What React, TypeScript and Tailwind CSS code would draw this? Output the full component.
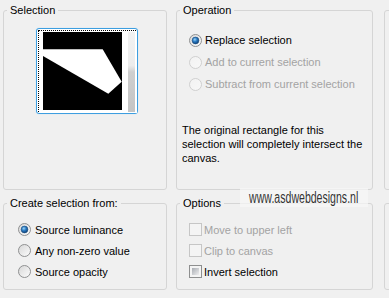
import React from "react";

const font = { fontFamily: '"Liberation Sans", Arial, sans-serif' };

function Radio({ checked, disabled }: { checked?: boolean; disabled?: boolean }) {
    const id = checked ? "rc" : disabled ? "rd" : "rn";
    return (
        <svg width="13" height="13" viewBox="0 0 13 13" className="shrink-0">
            <defs>
                <linearGradient id={id + "f"} x1="0" y1="0" x2="1" y2="1">
                    <stop offset="0" stopColor={disabled ? "#f2f2f2" : "#d6d6d6"} />
                    <stop offset="1" stopColor={disabled ? "#f8f8f8" : "#fdfdfd"} />
                </linearGradient>
                <radialGradient id={id + "d"} cx="0.4" cy="0.35" r="0.7">
                    <stop offset="0" stopColor="#9fd6f7" />
                    <stop offset="0.45" stopColor="#2b7cc4" />
                    <stop offset="1" stopColor="#0d3a6e" />
                </radialGradient>
            </defs>
            <circle cx="6.5" cy="6.5" r="6" fill={`url(#${id}f)`} stroke={disabled ? "#cfcfcf" : "#8f9091"} strokeWidth="1" />
            {checked && <circle cx="6.5" cy="6.5" r="3.4" fill={`url(#${id}d)`} stroke="#1b4d7f" strokeWidth="0.6" />}
        </svg>
    );
}

function Check({ disabled }: { disabled?: boolean }) {
    return (
        <div className={`w-[13px] h-[13px] shrink-0 border p-[2px] ${disabled ? "border-[#c6c6c6] bg-[#f4f4f4]" : "border-[#8e8f8f] bg-[#f4f4f4]"}`}>
            {!disabled && <div className="w-full h-full bg-gradient-to-br from-[#a9adb3] to-[#eeeeef]" />}
        </div>
    );
}

function Group({ title, className, children }: { title?: string; className?: string; children?: React.ReactNode }) {
    return (
        <fieldset className={`border border-[#d5d5d5] rounded-[3px] min-w-0 ${className ?? ""}`}>
            {title && <legend className="ml-[3px] px-[3px] text-[11px] leading-[14px] text-black">{title}</legend>}
            {children}
        </fieldset>
    );
}

function SelectionPreview() {
    return (
        <div className="ml-[32px] mt-[11px] w-[102px] h-[86px] rounded-[3px] border border-[#3d9ee0] p-px bg-white shadow-[0_0_1px_#9fd0f2]">
            <div className="w-full h-full border border-dotted border-black">
                <svg width="98" height="82" viewBox="0 0 98 82" className="block">
                    <defs>
                        <linearGradient id="strip" x1="0" y1="0" x2="0" y2="1">
                            <stop offset="0" stopColor="#f2f2f2" />
                            <stop offset="0.42" stopColor="#ececec" />
                            <stop offset="0.5" stopColor="#cfcfcf" />
                            <stop offset="1" stopColor="#c4c4c4" />
                        </linearGradient>
                    </defs>
                    <rect x="0" y="0" width="98" height="82" fill="#fff" />
                    <rect x="4" y="1" width="79" height="78" fill="#000" />
                    <polygon points="4,18.3 63.7,18.3 82.7,50.7 69.3,62.7 4,25" fill="#fff" />
                    <rect x="89" y="1" width="7" height="80" fill="url(#strip)" />
                </svg>
            </div>
        </div>
    );
}

export default function App() {
    return (
        <div className="relative w-[389px] h-[298px] overflow-hidden bg-[#f0f0f0] text-[11px] leading-[14px]" style={font}>
            <div className="flex gap-[9px] pt-[3px] pl-[3px] w-[440px]">
                <div className="w-[164px] shrink-0 flex flex-col gap-[6px]">
                    <Group title="Selection" className="h-[187px]">
                        <SelectionPreview />
                    </Group>

                    <Group title="Create selection from:" className="h-[94px]">
                        <div className="mt-[9px] pl-[14px] flex flex-col">
                            <label className="h-[21px] flex items-center gap-[4px] text-black">
                                <Radio checked />
                                <span>Source luminance</span>
                            </label>
                            <label className="h-[21px] flex items-center gap-[4px] text-black">
                                <Radio />
                                <span>Any non-zero value</span>
                            </label>
                            <label className="h-[21px] flex items-center gap-[4px] text-black">
                                <Radio />
                                <span>Source opacity</span>
                            </label>
                        </div>
                    </Group>
                </div>

                <div className="w-[197px] shrink-0 flex flex-col gap-[6px]">
                    <Group title="Operation" className="h-[187px]">
                        <div className="mt-[12px] pl-[12px] flex flex-col">
                            <label className="h-[22px] flex items-center gap-[3px] text-black">
                                <Radio checked />
                                <span>Replace selection</span>
                            </label>
                            <label className="h-[22px] flex items-center gap-[3px] text-[#a3a3a3]">
                                <Radio disabled />
                                <span>Add to current selection</span>
                            </label>
                            <label className="h-[22px] flex items-center gap-[3px] text-[#a3a3a3]">
                                <Radio disabled />
                                <span>Subtract from current selection</span>
                            </label>
                        </div>
                        <p className="mt-[28px] pl-[5px] text-black leading-[14px] whitespace-nowrap">
                            The original rectangle for this
                            <br />
                            selection will completely intersect the
                            <br />
                            canvas.
                        </p>
                    </Group>

                    <Group title="Options" className="h-[94px]">
                        <div className="mt-[9px] pl-[12px] flex flex-col">
                            <label className="h-[21px] flex items-center gap-[2px] text-[#a3a3a3]">
                                <Check disabled />
                                <span>Move to upper left</span>
                            </label>
                            <label className="h-[21px] flex items-center gap-[2px] text-[#a3a3a3]">
                                <Check disabled />
                                <span>Clip to canvas</span>
                            </label>
                            <label className="h-[21px] flex items-center gap-[2px] text-black">
                                <Check />
                                <span>Invert selection</span>
                            </label>
                        </div>
                    </Group>
                </div>

                <div className="w-[40px] shrink-0 ml-[2px] flex flex-col gap-[6px]">
                    <Group className="h-[180px] mt-[7px]" />
                    <Group className="h-[87px] mt-[7px]" />
                </div>
            </div>

            {/* watermark */}
            <div className="absolute left-[240px] top-[188px] h-[19px] w-[128px] bg-[#f7f7f7]/70 flex items-center justify-center">
                <span className="block text-[16px] leading-[16px] text-[#333] origin-center scale-x-[0.66] whitespace-nowrap [text-shadow:0_0_2px_#fff]">
                    www.asdwebdesigns.nl
                </span>
            </div>
        </div>
    );
}
